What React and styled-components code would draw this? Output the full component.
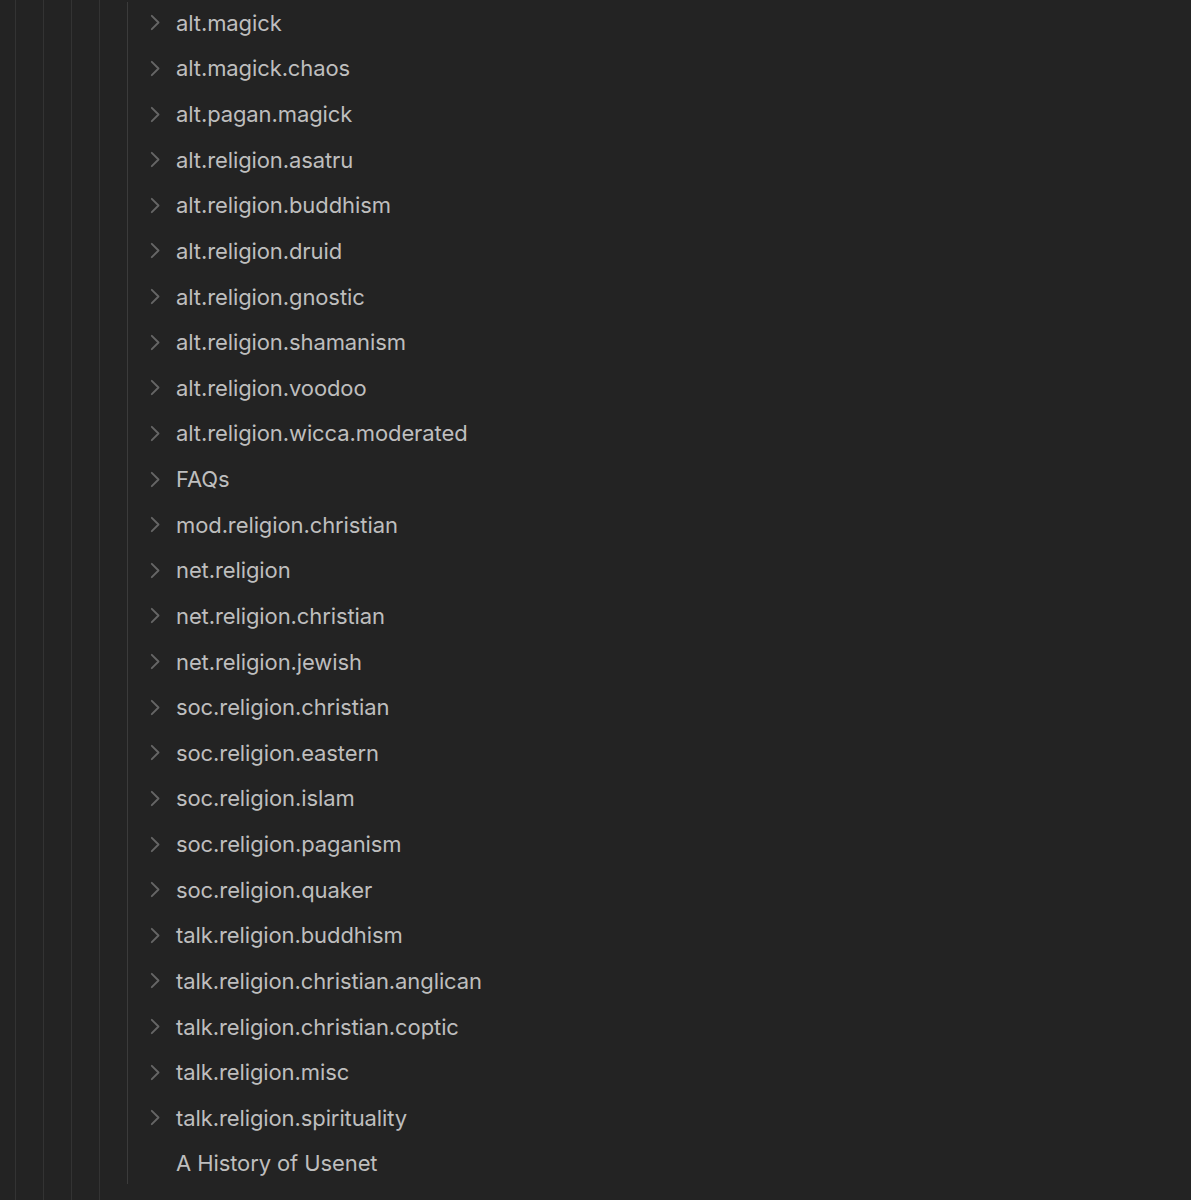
import React from 'react';
import styled, { createGlobalStyle } from 'styled-components';

const groups = [
  'alt.magick',
  'alt.magick.chaos',
  'alt.pagan.magick',
  'alt.religion.asatru',
  'alt.religion.buddhism',
  'alt.religion.druid',
  'alt.religion.gnostic',
  'alt.religion.shamanism',
  'alt.religion.voodoo',
  'alt.religion.wicca.moderated',
  'FAQs',
  'mod.religion.christian',
  'net.religion',
  'net.religion.christian',
  'net.religion.jewish',
  'soc.religion.christian',
  'soc.religion.eastern',
  'soc.religion.islam',
  'soc.religion.paganism',
  'soc.religion.quaker',
  'talk.religion.buddhism',
  'talk.religion.christian.anglican',
  'talk.religion.christian.coptic',
  'talk.religion.misc',
  'talk.religion.spirituality',
];

const GlobalStyle = createGlobalStyle`
  html, body {
    margin: 0;
    padding: 0;
    background: #232323;
  }
  body {
    font-family: Inter, "Noto Sans", sans-serif;
    -webkit-font-smoothing: antialiased;
  }
`;

const Page = styled.div`
  height: 1200px;
  overflow: hidden;
  display: flex;
  background: #232323;
`;

// an ancestor level of the tree, drawn as a vertical guide
const Indent = styled.div`
  flex: none;
  width: 28px;
  display: flex;
  align-items: stretch;
  ${p => p.first && 'margin-left: 15px;'}
`;

const Guide = styled.div`
  width: 1px;
  background: ${p => (p.active ? '#3b3b3b' : '#333333')};
  ${p => p.active && 'margin: 2px 0 16px;'}
`;

const Nest = styled.div`
  flex: 1;
  display: flex;
  min-width: 0;
`;

const List = styled.ul`
  list-style: none;
  margin: 0;
  padding: 0;
  flex: 1;
`;

const Row = styled.li`
  height: 45.64px;
  display: flex;
  align-items: center;
  margin-left: -5px;
`;

const Toggle = styled.span`
  flex: none;
  width: 26px;
  height: 20px;
  display: flex;
  align-items: center;
  justify-content: flex-start;
  color: #666666;
`;

const Label = styled.span`
  color: #bebebe;
  font-size: 22px;
  letter-spacing: -0.1px;
  white-space: nowrap;
`;

const Chevron = () => (
  <svg width="11" height="17" viewBox="0 0 11 17" fill="none">
    <path d="M1.8 1.8 L8.5 8.5 L1.8 15.2" stroke="currentColor" strokeWidth="1.9" strokeLinecap="round" strokeLinejoin="round" />
  </svg>
);

export default function App() {
  return (
    <>
      <GlobalStyle />
      <Page>
        <Indent first><Guide /></Indent>
        <Indent><Guide /></Indent>
        <Indent><Guide /></Indent>
        <Indent><Guide /></Indent>
        <Nest>
          <Indent><Guide active /></Indent>
          <List>
            {groups.map(name => (
              <Row key={name}>
                <Toggle><Chevron /></Toggle>
                <Label>{name}</Label>
              </Row>
            ))}
            <Row>
              <Toggle />
              <Label>A History of Usenet</Label>
            </Row>
          </List>
        </Nest>
      </Page>
    </>
  );
}
